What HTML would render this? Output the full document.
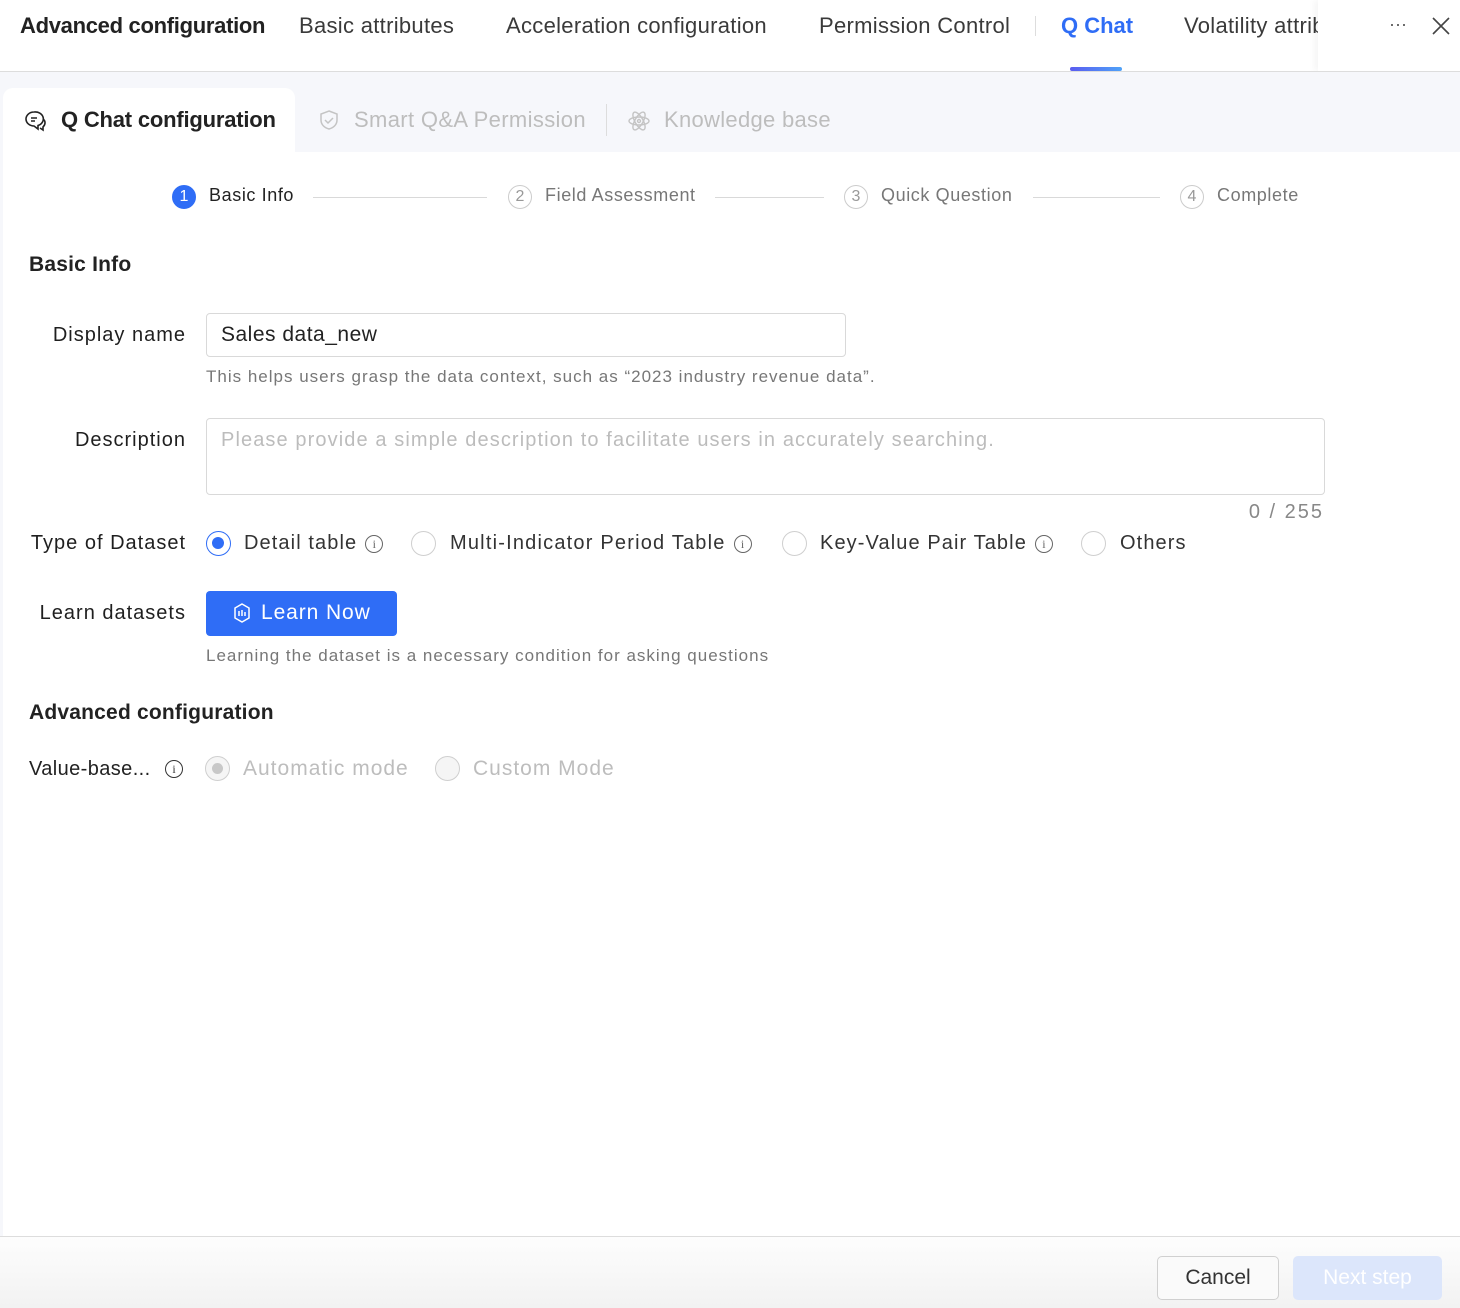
<!DOCTYPE html>
<html><head><meta charset="utf-8"><style>
*{box-sizing:border-box;margin:0;padding:0}
body{width:1460px;height:1308px;position:relative;overflow:hidden;background:#fff;font-family:"Liberation Sans",Arial,sans-serif;color:#1f1f1f}
.a{position:absolute;white-space:nowrap}
.tab{top:13px;font-size:22px;color:#3a3a3a;letter-spacing:0.3px}
.step{top:185px;font-size:18px;color:#777;letter-spacing:0.6px}
.num{position:absolute;width:24px;height:24px;border-radius:50%;border:1px solid #ccc;color:#999;font-size:16px;text-align:center;line-height:22px;top:185px}
.line{position:absolute;top:197px;height:1px;background:#d9d9d9}
.lbl{font-size:20px;color:#1f1f1f;letter-spacing:1px}
.radio{position:absolute;width:25px;height:25px;border-radius:50%;border:1px solid #cfcfcf;background:#fff}
.rl{display:flex;align-items:center;font-size:20px;color:#333;letter-spacing:1.1px}
.info{display:inline-block;width:18px;height:18px;border:1.3px solid #666;border-radius:50%;font-size:12px;text-align:center;line-height:16px;color:#666;font-family:"Liberation Serif",serif;letter-spacing:0;margin-left:8px}
</style></head><body>
<div class="a" style="left:20px;top:13px;font-size:22px;font-weight:bold;color:#222;letter-spacing:-0.3px">Advanced configuration</div>
<div class="a tab" style="left:299px">Basic attributes</div>
<div class="a tab" style="left:506px">Acceleration configuration</div>
<div class="a tab" style="left:819px">Permission Control</div>
<div class="a" style="left:1035px;top:16px;width:1px;height:20px;background:#ddd"></div>
<div class="a tab" style="left:1061px;color:#2f6df6;font-weight:bold;letter-spacing:0">Q Chat</div>
<div class="a" style="left:1070px;top:67px;width:52px;height:4px;border-radius:2px;background:linear-gradient(90deg,#5a5cf0,#4fa2f8)"></div>
<div class="a tab" style="left:1184px;width:134px;overflow:hidden">Volatility attributes</div>
<div class="a" style="left:1318px;top:0;width:142px;height:71px;background:#fff;box-shadow:-4px 0 6px rgba(0,0,0,0.04)"></div>
<div class="a" style="left:1389px;top:14px;font-size:18px;color:#555">···</div>
<svg class="a" style="left:1432px;top:17px" width="18" height="18" viewBox="0 0 18 18"><path d="M1 1L17 17M17 1L1 17" stroke="#444" stroke-width="1.6"/></svg>
<div class="a" style="left:0;top:71px;width:1460px;height:1px;background:#ddd"></div>
<div class="a" style="left:0;top:72px;width:1460px;height:80px;background:#f6f7fb"></div>
<div class="a" style="left:0;top:72px;width:3px;height:1236px;background:#f6f7fb"></div>
<div class="a" style="left:3px;top:88px;width:292px;height:70px;background:#fff;border-radius:10px 10px 0 0"></div>
<svg class="a" style="left:24px;top:109px" width="24" height="24" viewBox="0 0 24 24" fill="none" stroke="#222" stroke-width="1.6"><path d="M10 3a8 7 0 1 0 0 14l4 3v-3.5A8 7 0 0 0 10 3z"/><path d="M7 9h6M7 12h4"/><path d="M19 10a6 5 0 0 1 2 4c0 2-1 3-2 4v3l-3-2"/></svg>
<div class="a" style="left:61px;top:107px;font-size:22px;font-weight:bold;color:#222;letter-spacing:-0.2px">Q Chat configuration</div>
<svg class="a" style="left:318px;top:109px" width="22" height="22" viewBox="0 0 22 22" fill="none" stroke="#c4c4c4" stroke-width="1.5"><path d="M11 2l8 3v6c0 5-4 8-8 9-4-1-8-4-8-9V5z"/><path d="M7 11l3 3 5-5"/></svg>
<div class="a" style="left:354px;top:107px;font-size:22px;color:#bdbdbd;letter-spacing:0.35px">Smart Q&amp;A Permission</div>
<div class="a" style="left:606px;top:104px;width:1px;height:32px;background:#ddd"></div>
<svg class="a" style="left:627px;top:109px" width="24" height="24" viewBox="0 0 24 24" fill="none" stroke="#c4c4c4" stroke-width="1.4"><ellipse cx="12" cy="12" rx="10" ry="4"/><ellipse cx="12" cy="12" rx="10" ry="4" transform="rotate(60 12 12)"/><ellipse cx="12" cy="12" rx="10" ry="4" transform="rotate(120 12 12)"/><circle cx="12" cy="12" r="1.5"/></svg>
<div class="a" style="left:664px;top:107px;font-size:22px;color:#bdbdbd;letter-spacing:0.3px">Knowledge base</div>
<div class="num" style="left:172px;background:#2f6df6;border-color:#2f6df6;color:#fff">1</div>
<div class="a step" style="left:209px;color:#222">Basic Info</div>
<div class="line" style="left:313px;width:174px"></div>
<div class="num" style="left:508px">2</div>
<div class="a step" style="left:545px">Field Assessment</div>
<div class="line" style="left:715px;width:109px"></div>
<div class="num" style="left:844px">3</div>
<div class="a step" style="left:881px">Quick Question</div>
<div class="line" style="left:1033px;width:127px"></div>
<div class="num" style="left:1180px">4</div>
<div class="a step" style="left:1217px">Complete</div>
<div class="a" style="left:29px;top:253px;font-size:21px;font-weight:bold;color:#222;letter-spacing:0.2px">Basic Info</div>
<div class="a lbl" style="right:1274px;top:324px">Display name</div>
<div class="a" style="left:206px;top:313px;width:640px;height:44px;border:1px solid #d9d9d9;border-radius:4px;font-size:21px;color:#222;padding:9px 14px;letter-spacing:0.5px">Sales data_new</div>
<div class="a" style="left:206px;top:367px;font-size:17px;color:#777;letter-spacing:1px">This helps users grasp the data context, such as “2023 industry revenue data”.</div>
<div class="a lbl" style="right:1274px;top:429px">Description</div>
<div class="a" style="left:206px;top:418px;width:1119px;height:77px;border:1px solid #d9d9d9;border-radius:4px;font-size:20px;color:#bcbcbc;padding:10px 14px;letter-spacing:1.1px">Please provide a simple description to facilitate users in accurately searching.</div>
<div class="a" style="right:136px;top:501px;font-size:20px;color:#888;letter-spacing:2px">0 / 255</div>
<div class="a lbl" style="right:1274px;top:532px">Type of Dataset</div>
<div class="radio" style="left:206px;top:531px;border:1.5px solid #2f6df6"><div style="position:absolute;left:5px;top:5px;width:12px;height:12px;border-radius:50%;background:#2f6df6"></div></div>
<div class="a rl" style="left:244px;top:532px">Detail table<span class="info">i</span></div>
<div class="radio" style="left:411px;top:531px"></div>
<div class="a rl" style="left:450px;top:532px;letter-spacing:1.2px">Multi-Indicator Period Table<span class="info">i</span></div>
<div class="radio" style="left:782px;top:531px"></div>
<div class="a rl" style="left:820px;top:532px">Key-Value Pair Table<span class="info">i</span></div>
<div class="radio" style="left:1081px;top:531px"></div>
<div class="a rl" style="left:1120px;top:532px">Others</div>
<div class="a lbl" style="right:1274px;top:602px">Learn datasets</div>
<div class="a" style="left:206px;top:591px;width:191px;height:45px;background:#2f6df6;border-radius:4px;color:#fff;font-size:21px;padding:10px 0 0 55px;letter-spacing:0.9px">Learn Now</div>
<svg class="a" style="left:233px;top:603px" width="18" height="20" viewBox="0 0 18 20" fill="none" stroke="#fff" stroke-width="1.5"><path d="M9 1l7 4v10l-7 4-7-4V5z"/><path d="M6 8v5M9 7v6M12 9v4"/></svg>
<div class="a" style="left:206px;top:646px;font-size:17px;color:#777;letter-spacing:1px">Learning the dataset is a necessary condition for asking questions</div>
<div class="a" style="left:29px;top:701px;font-size:21px;font-weight:bold;color:#222;letter-spacing:0.2px">Advanced configuration</div>
<div class="a" style="left:29px;top:758px;font-size:20px;color:#222;letter-spacing:0.4px">Value-base...</div>
<div class="a info" style="left:165px;top:760px;border-color:#333;color:#333;margin:0">i</div>
<div class="radio" style="left:205px;top:756px;background:#f5f5f5"><div style="position:absolute;left:6px;top:6px;width:11px;height:11px;border-radius:50%;background:#c8c8c8"></div></div>
<div class="a" style="left:243px;top:757px;font-size:21px;color:#bdbdbd;letter-spacing:1px">Automatic mode</div>
<div class="radio" style="left:435px;top:756px;background:#f5f5f5"></div>
<div class="a" style="left:473px;top:757px;font-size:21px;color:#bdbdbd;letter-spacing:1px">Custom Mode</div>
<div class="a" style="left:0;top:1236px;width:1460px;height:72px;background:linear-gradient(180deg,#fdfdfd,#f2f2f2);border-top:1px solid #ddd"></div>
<div class="a" style="left:1157px;top:1256px;width:122px;height:44px;border:1px solid #d0d0d0;border-radius:5px;background:#fafafa;font-size:21px;color:#333;text-align:center;line-height:42px">Cancel</div>
<div class="a" style="left:1293px;top:1256px;width:149px;height:44px;border-radius:5px;background:#dce6fb;font-size:21px;color:#fff;text-align:center;line-height:44px">Next step</div>
</body></html>
